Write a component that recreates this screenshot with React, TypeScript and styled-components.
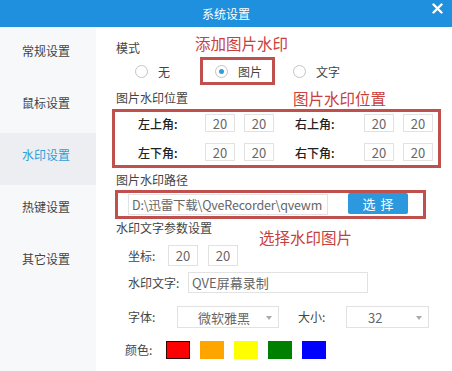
import React from "react";
import styled, { createGlobalStyle } from "styled-components";

const GlobalStyle = createGlobalStyle`
  html, body {
    margin: 0;
    padding: 0;
    background: #ffffff;
  }
  body {
    font-family: "Noto Sans CJK SC", "Noto Sans", sans-serif;
    color: #333;
  }
`;

const Window = styled.div`
  width: 452px;
  height: 371px;
  display: flex;
  flex-direction: column;
  overflow: hidden;
  background: #fff;
`;

const TitleBar = styled.div`
  height: 27px;
  flex: none;
  background: #1e90de;
  display: flex;
  align-items: center;
  justify-content: center;
  position: relative;
  color: #fff;
  font-size: 12px;
  line-height: 27px;
`;

const CloseButton = styled.div`
  position: absolute;
  right: 9px;
  top: 3px;
  width: 11px;
  height: 11px;
  display: flex;
`;

const Body = styled.div`
  flex: 1;
  display: flex;
`;

const Sidebar = styled.div`
  width: 96px;
  flex: none;
  background: #f7f8fa;
  padding-top: 2px;
  display: flex;
  flex-direction: column;
`;

const NavItem = styled.div<{ $active?: boolean }>`
  height: 52px;
  padding: 15px 0 0 22px;
  box-sizing: border-box;
  font-size: 12px;
  line-height: 14px;
  color: ${(p) => (p.$active ? "#2e9fd8" : "#444")};
  background: ${(p) => (p.$active ? "#eceef1" : "transparent")};
`;

const Main = styled.div`
  flex: 1;
  padding: 7px 0 0 20px;
  display: flex;
  flex-direction: column;
`;

const HeadRow = styled.div<{ $top?: number }>`
  display: flex;
  align-items: flex-start;
  margin-top: ${(p) => p.$top ?? 0}px;
`;

const Label = styled.div<{ $width?: number; $pt?: number }>`
  font-size: 12px;
  line-height: 16px;
  color: #444;
  padding-top: ${(p) => p.$pt ?? 0}px;
  width: ${(p) => (p.$width ? `${p.$width}px` : "auto")};
  flex: none;
  white-space: nowrap;
`;

const Note = styled.div<{ $left: number; $pt?: number }>`
  font-size: 15.5px;
  line-height: 18px;
  color: #c8403c;
  margin-left: ${(p) => p.$left}px;
  padding-top: ${(p) => p.$pt ?? 0}px;
  white-space: nowrap;
`;

const MarkBox = styled.div<{ $width?: number; $left?: number }>`
  border: 3px solid #c0504d;
  box-sizing: border-box;
  width: ${(p) => (p.$width ? `${p.$width}px` : "auto")};
  margin-left: ${(p) => p.$left ?? 0}px;
`;

const RadioRow = styled.div`
  display: flex;
  align-items: center;
  height: 28px;
  margin-top: 1px;
  padding-left: 19px;
`;

const RadioItem = styled.div<{ $width?: number }>`
  display: flex;
  align-items: center;
  gap: 10px;
  font-size: 12px;
  color: #444;
  width: ${(p) => (p.$width ? `${p.$width}px` : "auto")};
`;

const RadioFrame = styled(MarkBox)`
  height: 28px;
  display: flex;
  align-items: center;
  padding-left: 12px;
  width: 75px;
  margin-right: 18px;
`;

const RadioCircle = styled.span<{ $checked?: boolean }>`
  width: 13px;
  height: 13px;
  border-radius: 50%;
  box-sizing: border-box;
  border: 1px solid #c4c4c4;
  background: #fff;
  display: flex;
  align-items: center;
  justify-content: center;
  flex: none;
  &::after {
    content: "";
    width: 5px;
    height: 5px;
    border-radius: 50%;
    background: ${(p) => (p.$checked ? "#2e9fd8" : "transparent")};
  }
`;

const PosBox = styled(MarkBox)`
  margin-top: 2px;
  margin-left: -4px;
  width: 329px;
  height: 59px;
  padding: 2px 0 0 23px;
  display: flex;
  flex-direction: column;
  gap: 11px;
`;

const PosRow = styled.div`
  display: flex;
  align-items: center;
  height: 18px;
`;

const Corner = styled.div<{ $width: number; $left?: number }>`
  width: ${(p) => p.$width}px;
  margin-left: ${(p) => p.$left ?? 0}px;
  flex: none;
  font-size: 12px;
  font-weight: 500;
  color: #222;
`;

const Field = styled.div<{ $width: number; $height?: number; $gap?: number; $align?: string }>`
  width: ${(p) => p.$width}px;
  height: ${(p) => p.$height ?? 18}px;
  margin-left: ${(p) => p.$gap ?? 0}px;
  box-sizing: border-box;
  border: 1px solid #e2e2e2;
  background: #fff;
  color: #666;
  font-size: 13px;
  display: flex;
  align-items: center;
  justify-content: ${(p) => p.$align ?? "center"};
  padding: 0 3px;
  flex: none;
  white-space: nowrap;
  overflow: hidden;
`;

const PathField = styled(Field)`
  font-size: 12.5px;
  letter-spacing: -0.2px;
`;

const PathBox = styled(MarkBox)`
  margin-top: 2px;
  margin-left: -1px;
  width: 311px;
  height: 29px;
  display: flex;
  align-items: center;
  padding-left: 10px;
`;

const ChooseButton = styled.div`
  width: 60px;
  height: 21px;
  margin-left: 20px;
  margin-top: -2px;
  background: #2c98de;
  border-radius: 2px;
  color: #fff;
  font-size: 13px;
  letter-spacing: 5px;
  text-indent: 5px;
  display: flex;
  align-items: center;
  justify-content: center;
`;

const ParamRow = styled.div<{ $top: number; $left?: number }>`
  display: flex;
  align-items: center;
  margin-top: ${(p) => p.$top}px;
  padding-left: ${(p) => p.$left ?? 12}px;
`;

const Select = styled(Field)`
  position: relative;
  justify-content: flex-start;
  padding-left: 0;
`;

const SelectText = styled.span<{ $indent: number }>`
  padding-left: ${(p) => p.$indent}px;
  color: #666;
`;

const Arrow = styled.span`
  position: absolute;
  right: 6px;
  top: 9px;
  width: 0;
  height: 0;
  border-left: 3px solid transparent;
  border-right: 3px solid transparent;
  border-top: 4px solid #aaa;
`;

const Swatch = styled.div<{ $color: string; $selected?: boolean }>`
  width: 24px;
  height: 18px;
  box-sizing: border-box;
  background: ${(p) => p.$color};
  border: ${(p) => (p.$selected ? "1px solid #3a0000" : "none")};
  margin-left: 10px;
  flex: none;
  &:first-of-type {
    margin-left: 0;
  }
`;

const Swatches = styled.div`
  display: flex;
`;

const navItems = ["常规设置", "鼠标设置", "水印设置", "热键设置", "其它设置"];
const colors = ["#ff0000", "#ffa500", "#ffff00", "#008000", "#0000ff"];

const CornerGroup = ({ label, width, left }: { label: string; width: number; left?: number }) => (
  <>
    <Corner $width={width} $left={left}>
      {label}
    </Corner>
    <Field $width={30}>20</Field>
    <Field $width={30} $gap={9}>
      20
    </Field>
  </>
);

export default function App() {
  return (
    <Window>
      <GlobalStyle />
      <TitleBar>
        系统设置
        <CloseButton>
          <svg width="11" height="11" viewBox="0 0 11 11">
            <path d="M1.5 1.5 L9.5 9.5 M9.5 1.5 L1.5 9.5" stroke="#fff" strokeWidth="2.4" strokeLinecap="round" />
          </svg>
        </CloseButton>
      </TitleBar>
      <Body>
        <Sidebar>
          {navItems.map((n) => (
            <NavItem key={n} $active={n === "水印设置"}>
              {n}
            </NavItem>
          ))}
        </Sidebar>
        <Main>
          <HeadRow>
            <Label $pt={6}>模式</Label>
            <Note $left={55}>添加图片水印</Note>
          </HeadRow>
          <RadioRow>
            <RadioItem $width={65}>
              <RadioCircle />无
            </RadioItem>
            <RadioFrame>
              <RadioItem>
                <RadioCircle $checked />图片
              </RadioItem>
            </RadioFrame>
            <RadioItem>
              <RadioCircle />文字
            </RadioItem>
          </RadioRow>
          <HeadRow $top={4}>
            <Label $pt={1}>图片水印位置</Label>
            <Note $left={105}>图片水印位置</Note>
          </HeadRow>
          <PosBox>
            <PosRow>
              <CornerGroup label="左上角:" width={67} />
              <CornerGroup label="右上角:" width={69} left={21} />
            </PosRow>
            <PosRow>
              <CornerGroup label="左下角:" width={67} />
              <CornerGroup label="右下角:" width={69} left={21} />
            </PosRow>
          </PosBox>
          <HeadRow $top={4}>
            <Label>图片水印路径</Label>
          </HeadRow>
          <PathBox>
            <PathField $width={200} $height={21} $align="flex-start">
              D:\迅雷下载\QveRecorder\qvewm
            </PathField>
            <ChooseButton>选择</ChooseButton>
          </PathBox>
          <HeadRow $top={1}>
            <Label>水印文字参数设置</Label>
            <Note $left={47} $pt={8}>
              选择水印图片
            </Note>
          </HeadRow>
          <ParamRow $top={-1}>
            <Label $width={40}>坐标:</Label>
            <Field $width={30} $height={21}>
              20
            </Field>
            <Field $width={30} $height={21} $gap={10}>
              20
            </Field>
          </ParamRow>
          <ParamRow $top={6}>
            <Label $width={60}>水印文字:</Label>
            <Field $width={180} $height={21} $align="flex-start">
              QVE屏幕录制
            </Field>
          </ParamRow>
          <ParamRow $top={13}>
            <Label $width={49}>字体:</Label>
            <Select $width={102} $height={22}>
              <SelectText $indent={20}>微软雅黑</SelectText>
              <Arrow />
            </Select>
            <Label $width={48} style={{ marginLeft: 19 }}>
              大小:
            </Label>
            <Select $width={83} $height={22}>
              <SelectText $indent={21}>32</SelectText>
              <Arrow />
            </Select>
          </ParamRow>
          <ParamRow $top={13} $left={9}>
            <Label $width={41}>颜色:</Label>
            <Swatches>
              {colors.map((c, i) => (
                <Swatch key={c} $color={c} $selected={i === 0} />
              ))}
            </Swatches>
          </ParamRow>
        </Main>
      </Body>
    </Window>
  );
}
